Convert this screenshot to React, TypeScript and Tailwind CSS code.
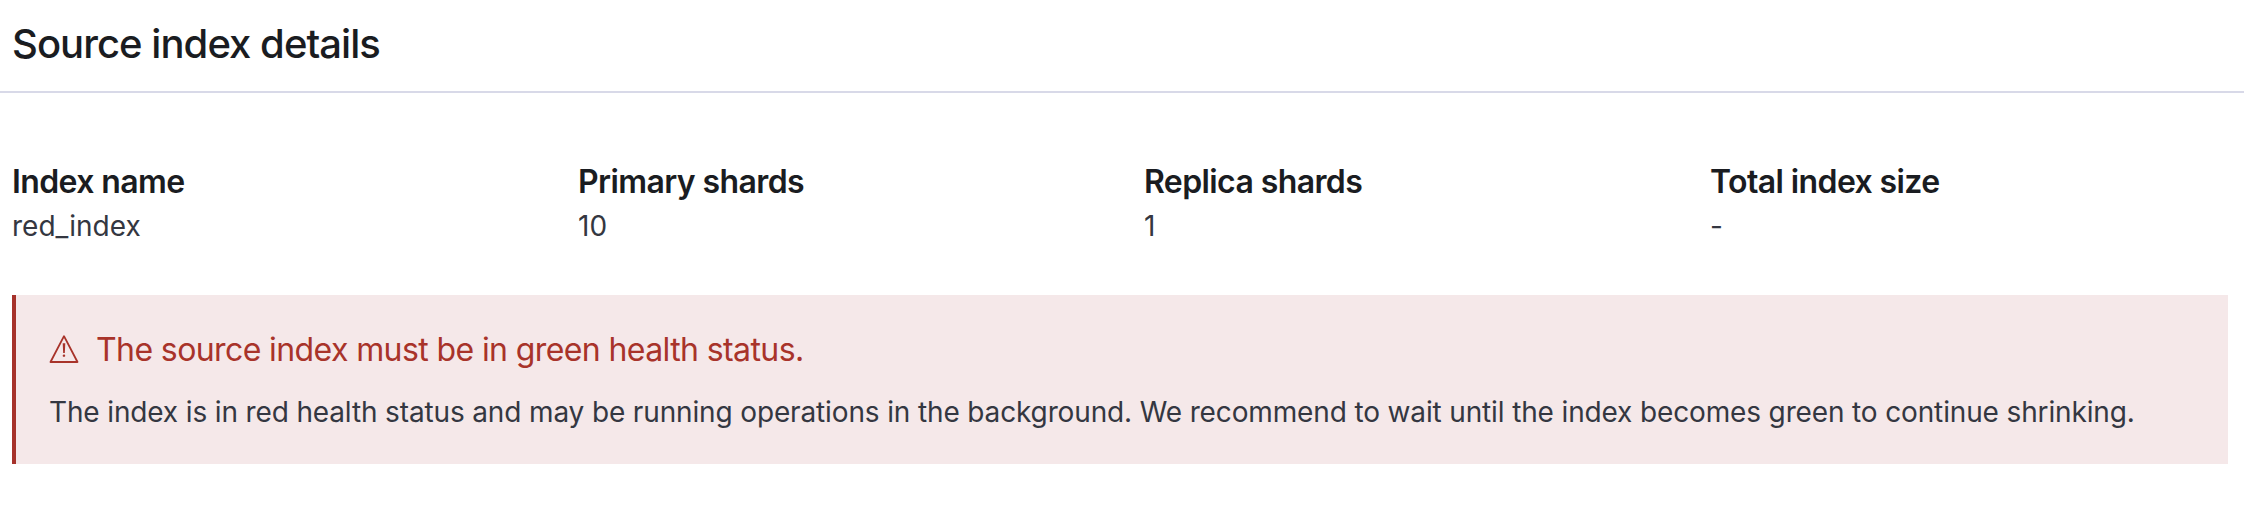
import React from 'react';

const details = [
  { label: 'Index name', value: 'red_index' },
  { label: 'Primary shards', value: '10' },
  { label: 'Replica shards', value: '1' },
  { label: 'Total index size', value: '-' },
];

const App: React.FC = () => {
  return (
    <div className="min-h-screen bg-white font-['Inter',sans-serif] text-[#1a1c21]">
      <div className="border-b-2 border-[#d8d9e8] pl-3 pr-4 pt-[18px] pb-[21px]">
        <h2 className="text-[40px] leading-[52px] font-medium tracking-[-0.95px]">Source index details</h2>
      </div>
      <div className="grid grid-cols-4 gap-12 pl-3 pr-4 pt-[67px]">
        {details.map((item) => (
          <div key={item.label}>
            <div className="text-[32px] leading-[44px] font-semibold tracking-[-0.6px]">{item.label}</div>
            <div className="text-[28px] leading-[44px] text-[#343741]">{item.value}</div>
          </div>
        ))}
      </div>
      <div className="ml-3 mr-4 mt-[47px] h-[169px] border-l-4 border-[#a6322b] bg-[#f5e8e9] pl-[33px] pt-[33px]">
        <div className="flex items-center gap-[16px] text-[#a8332a]">
          <svg width="32" height="32" viewBox="0 0 16 16" fill="currentColor" className="-mt-[2px] -ml-[1px]">
            <path d="M7.59 10.059 7.35 5.18h1.3L8.4 10.06h-.81Zm.394 1.901a.61.61 0 0 1-.448-.186.606.606 0 0 1-.186-.444c0-.174.062-.323.186-.446a.614.614 0 0 1 .448-.184c.169 0 .315.06.44.182.124.122.186.27.186.448a.6.6 0 0 1-.186.444.6.6 0 0 1-.44.186Z" />
            <path d="M1.25 14.5 8 1.6l6.75 12.9H1.25Z" fill="none" stroke="currentColor" strokeWidth="0.9" strokeLinejoin="round" />
          </svg>
          <span className="text-[32px] leading-[44px] tracking-[-0.6px]">The source index must be in green health status.</span>
        </div>
        <p className="mt-[18px] text-[28px] leading-[44px] tracking-[-0.14px] text-[#343741]">
          The index is in red health status and may be running operations in the background. We recommend to wait until the index becomes green to continue shrinking.
        </p>
      </div>
    </div>
  );
};

export default App;
